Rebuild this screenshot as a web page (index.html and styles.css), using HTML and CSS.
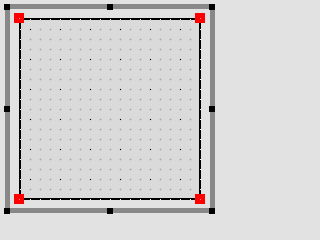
FILE: index.html
```html
<!DOCTYPE html>
<html>
<head>
<meta charset="utf-8">
<link rel="stylesheet" href="styles.css">
</head>
<body>
<div class="canvas">
  <div class="frame">
    <div class="shape">
      <svg class="grid" width="182" height="182" viewBox="0 0 182 182" shape-rendering="crispEdges">
        <defs>
          <pattern id="g" width="10" height="10" patternUnits="userSpaceOnUse">
            <rect x="1" y="0" width="1" height="1" fill="#c8c8c8"/>
            <rect x="0" y="1" width="1" height="1" fill="#c8c8c8"/>
            <rect x="2" y="1" width="1" height="1" fill="#c8c8c8"/>
            <rect x="1" y="2" width="1" height="1" fill="#c8c8c8"/>
            <rect x="1" y="1" width="1" height="1" fill="#a8a8a8"/>
          </pattern>
          <pattern id="k" width="30" height="30" patternUnits="userSpaceOnUse">
            <rect x="11" y="11" width="1" height="1" fill="#000"/>
          </pattern>
          <pattern id="w" width="10" height="10" patternUnits="userSpaceOnUse">
            <rect x="1" y="1" width="1" height="1" fill="#fff"/>
          </pattern>
        </defs>
        <rect x="0" y="0" width="182" height="182" fill="#dadada"/>
        <rect x="0" y="0" width="182" height="182" fill="url(#g)"/>
        <rect x="0" y="0" width="182" height="182" fill="url(#k)"/>
        <g fill="#000">
          <rect x="0" y="0" width="182" height="2"/>
          <rect x="0" y="180" width="182" height="2"/>
          <rect x="0" y="0" width="2" height="182"/>
          <rect x="180" y="0" width="2" height="182"/>
        </g>
        <g fill="url(#w)">
          <rect x="0" y="0" width="182" height="2"/>
          <rect x="0" y="180" width="182" height="2"/>
          <rect x="0" y="0" width="2" height="182"/>
          <rect x="180" y="0" width="2" height="182"/>
        </g>
      </svg>
      <span class="red r-tl"></span>
      <span class="red r-tr"></span>
      <span class="red r-bl"></span>
      <span class="red r-br"></span>
    </div>
    <span class="blk b-tl"></span>
    <span class="blk b-tm"></span>
    <span class="blk b-tr"></span>
    <span class="blk b-ml"></span>
    <span class="blk b-mr"></span>
    <span class="blk b-bl"></span>
    <span class="blk b-bm"></span>
    <span class="blk b-br"></span>
  </div>
</div>
</body>
</html>
```
FILE: styles.css
```css
html, body {
  margin: 0;
  padding: 0;
  background: #e2e2e2;
}
.canvas {
  width: 219px;
  height: 216px;
  box-sizing: border-box;
  padding: 4px 0 0 5px;
}
.frame {
  position: relative;
  width: 210px;
  height: 209px;
  box-sizing: border-box;
  border: 5px solid #888888;
  padding: 9px 0 0 9px;
}
.shape {
  position: relative;
  width: 182px;
  height: 182px;
}
.grid {
  display: block;
}
.red {
  position: absolute;
  width: 10px;
  height: 10px;
  background: #ff0000;
}
.red::after {
  content: "";
  position: absolute;
  left: 5px;
  top: 5px;
  width: 1px;
  height: 1px;
  background: #ff9a9a;
}
.r-tl { left: -5px; top: -5px; }
.r-tr { left: 176px; top: -5px; }
.r-bl { left: -5px; top: 176px; }
.r-br { left: 176px; top: 176px; }
.blk {
  position: absolute;
  width: 6px;
  height: 6px;
  background: #000;
}
.b-tl { left: -6px; top: -5px; }
.b-tm { left: 97px; top: -5px; }
.b-tr { left: 199px; top: -5px; }
.b-ml { left: -6px; top: 97px; }
.b-mr { left: 199px; top: 97px; }
.b-bl { left: -6px; top: 199px; }
.b-bm { left: 97px; top: 199px; }
.b-br { left: 199px; top: 199px; }
```
